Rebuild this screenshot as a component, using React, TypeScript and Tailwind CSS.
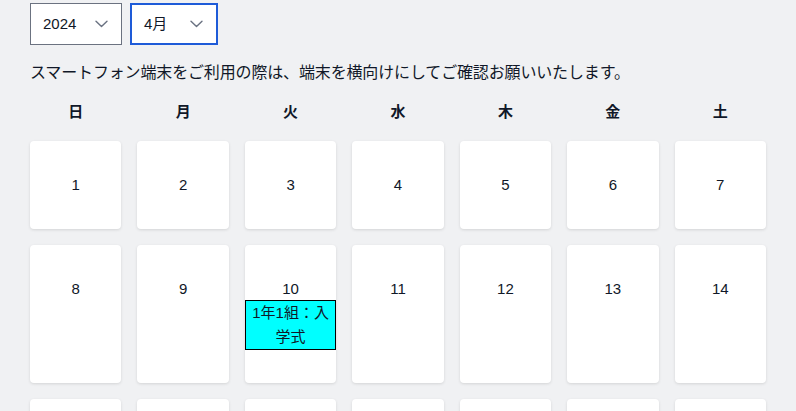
import React from 'react'

const weekdays = ['日', '月', '火', '水', '木', '金', '土']

const events: Record<number, string> = {
  10: '1年1組：入学式',
}

function Chevron() {
  return (
    <svg width="13" height="8" viewBox="0 0 13 8" fill="none" className="text-gray-500">
      <path d="M1 1.2l5.5 5.4L12 1.2" stroke="currentColor" strokeWidth="1.4" strokeLinecap="round" strokeLinejoin="round" />
    </svg>
  )
}

function Select({ label, active, width }: { label: string; active?: boolean; width: string }) {
  return (
    <button
      type="button"
      className={`flex h-[42px] items-center justify-between bg-white pl-[12px] pr-[13px] text-[15px] text-gray-900 ${width} ${
        active ? 'border-2 border-[#1e5bd8]' : 'border border-[#6b7280]'
      }`}
    >
      <span>{label}</span>
      <Chevron />
    </button>
  )
}

export default function App() {
  const days = Array.from({ length: 30 }, (_, i) => i + 1)
  const rows: number[][] = []
  for (let i = 0; i < days.length; i += 7) rows.push(days.slice(i, i + 7))

  return (
    <div
      className="min-h-screen bg-[#f0f1f3] px-[30px] pt-[3px] text-gray-900"
      style={{ fontFamily: '"Liberation Sans", "Noto Sans CJK JP", sans-serif' }}
    >
      <div className="flex gap-[8px]">
        <Select label="2024" width="w-[92px]" />
        <Select label="4月" active width="w-[88px]" />
      </div>

      <p className="mt-[16px] text-[16px] leading-[24px] tracking-[-0.15px]">
        スマートフォン端末をご利用の際は、端末を横向けにしてご確認お願いいたします。
      </p>

      <div className="mt-[15px] grid grid-cols-7 gap-x-[16px]">
        {weekdays.map((d) => (
          <div key={d} className="text-center text-[15px] font-bold leading-[24px]">
            {d}
          </div>
        ))}
      </div>

      <div className="mt-[17px] grid grid-cols-7 gap-[16px]">
        {rows.map((row) =>
          row.map((day) => (
            <div
              key={day}
              className="flex flex-col rounded-[4px] bg-white pt-[33px] pb-[33px] shadow-[0_1px_3px_rgba(0,0,0,0.12)]"
            >
              <div className="text-center text-[15px] leading-[22px]">{day}</div>
              {events[day] && (
                <div className="border border-black bg-[#00ffff] px-[4px] text-center text-[15px] leading-[24px]">
                  {events[day]}
                </div>
              )}
            </div>
          ))
        )}
      </div>
    </div>
  )
}
